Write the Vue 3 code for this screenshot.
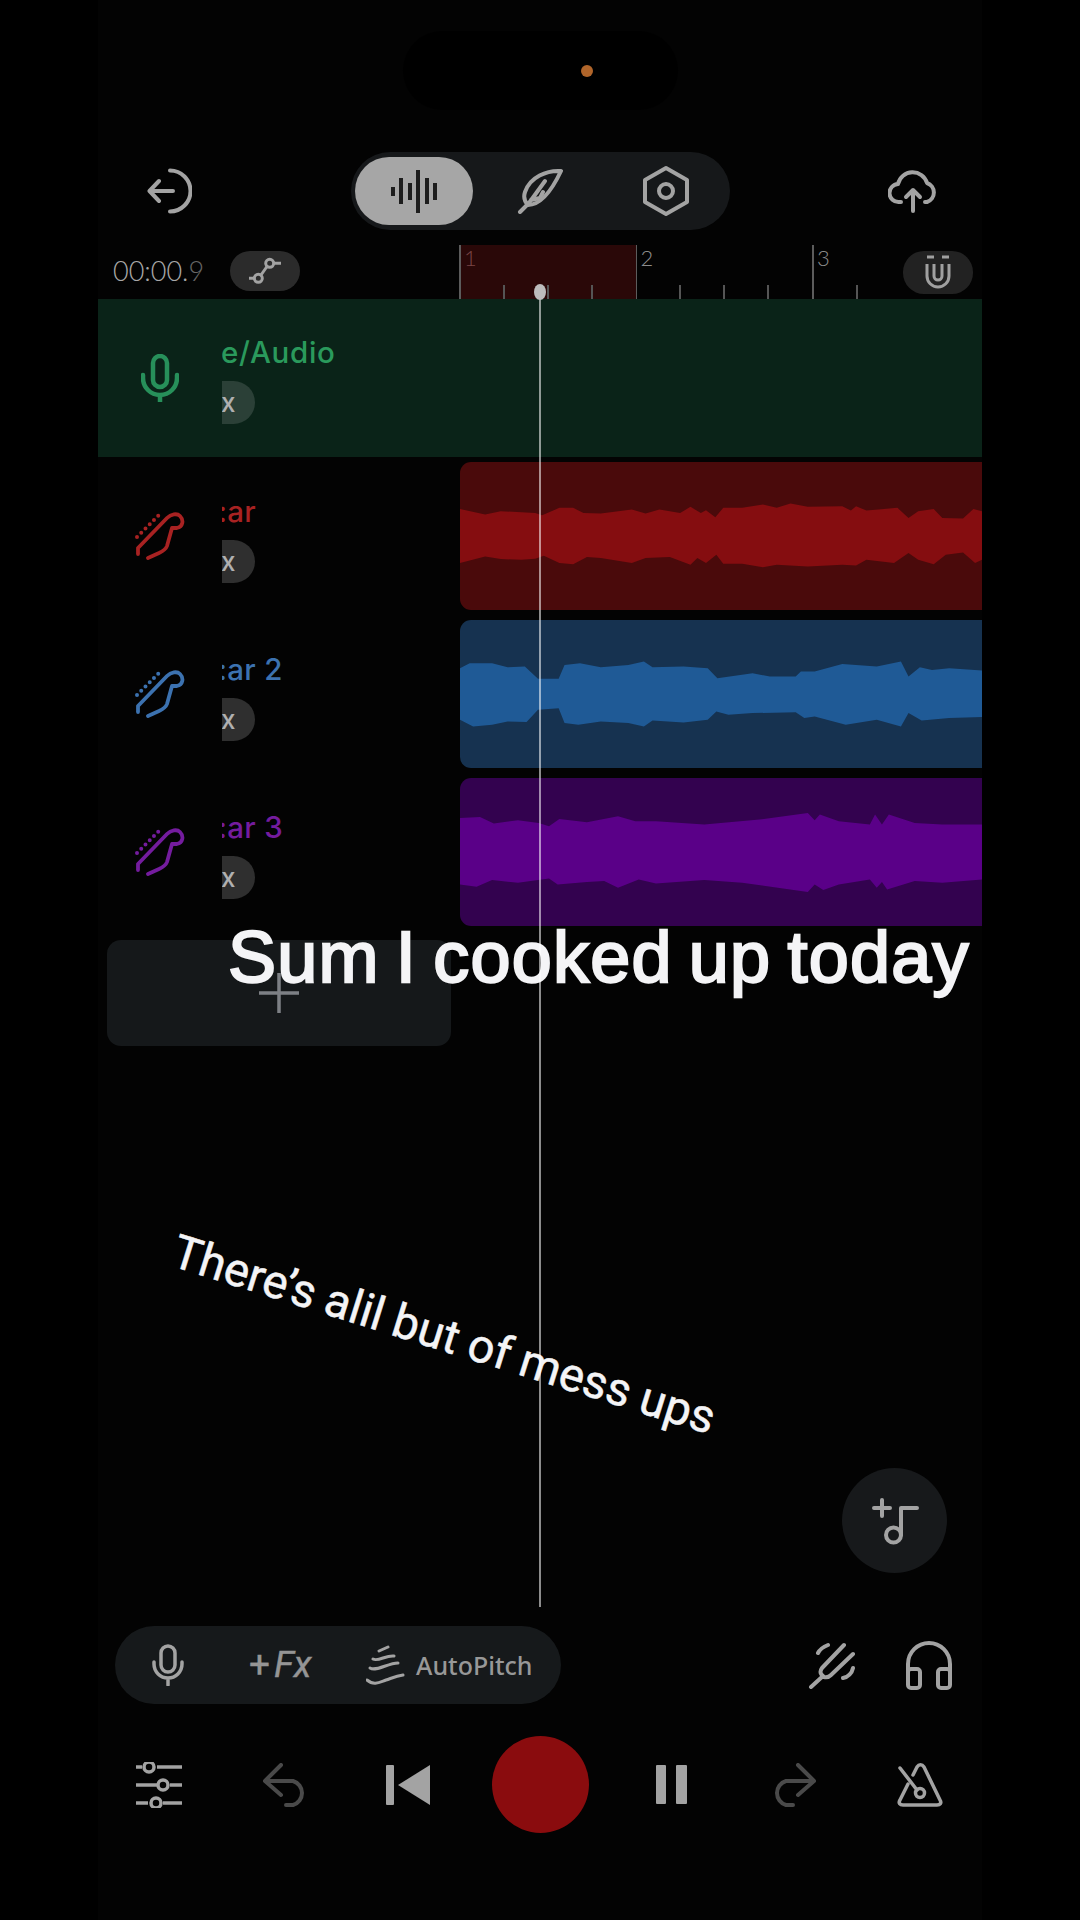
<script setup>
const pts = (top, bottom) => [...top, ...[...bottom].reverse()].map(p => p.join(',')).join(' ')

const redTop = [[32,178],[105,195],[150,185],[250,190],[270,197],[320,175],[360,175],[390,190],[440,192],[530,180],[570,192],[610,180],[670,190],[700,172],[730,190],[745,182],[772,203],[795,175],[850,175],[910,165],[950,175],[990,162],[1040,172],[1140,170],[1165,183],[1180,170],[1210,183],[1300,175],[1332,205],[1360,185],[1405,178],[1430,205],[1490,207],[1520,178],[1545,185]]
const redBottom = [[32,340],[105,320],[150,328],[210,330],[250,327],[275,318],[320,340],[360,343],[400,322],[440,325],[530,340],[570,325],[640,322],[700,345],[720,325],[745,340],[775,315],[795,342],[850,342],[910,352],[950,345],[1040,350],[1140,345],[1180,347],[1210,330],[1290,340],[1332,310],[1360,330],[1405,343],[1440,315],[1490,308],[1525,340],[1545,330]]
const blueTop = [[32,655],[60,640],[125,640],[170,652],[220,650],[258,687],[318,687],[335,645],[380,640],[440,652],[520,645],[565,635],[590,652],[680,650],[750,655],[778,685],[880,670],[930,680],[1005,680],[1020,665],[1060,665],[1140,642],[1240,650],[1310,635],[1332,680],[1365,652],[1400,660],[1450,655],[1545,662]]
const blueBottom = [[32,810],[70,830],[125,825],[170,815],[225,817],[258,780],[318,775],[335,820],[375,825],[440,815],[520,820],[565,830],[590,812],[680,818],[750,810],[775,785],[810,795],[880,790],[1005,787],[1030,805],[1060,800],[1150,825],[1240,810],[1310,830],[1332,790],[1370,812],[1450,805],[1545,802]]
const purpleTop = [[32,1105],[90,1102],[130,1122],[200,1112],[260,1120],[290,1130],[320,1108],[400,1118],[490,1100],[540,1115],[600,1115],[740,1125],[900,1110],[1040,1090],[1060,1112],[1075,1095],[1130,1115],[1220,1125],[1235,1095],[1255,1125],[1275,1095],[1350,1120],[1430,1125],[1545,1125]]
const purpleBottom = [[32,1305],[80,1312],[125,1292],[200,1300],[290,1287],[315,1305],[400,1298],[450,1295],[490,1315],[550,1290],[600,1302],[740,1292],[850,1300],[1040,1328],[1060,1305],[1085,1322],[1130,1305],[1220,1290],[1240,1315],[1255,1298],[1270,1320],[1350,1295],[1430,1300],[1545,1290]]

const tracks = [
  { name: ':ar', cls: 'red', box: '32 38 1513 442', points: pts(redTop, redBottom) },
  { name: ':ar 2', cls: 'blue', box: '32 510 1513 445', points: pts(blueTop, blueBottom) },
  { name: ':ar 3', cls: 'purple', box: '32 985 1513 445', points: pts(purpleTop, purpleBottom) },
]

const bars = [{ n: 1, x: 0 }, { n: 2, x: 176.5 }, { n: 3, x: 353 }]
const ticks = [44, 88, 132, 220, 264, 308, 397]
const waveBars = [9, 26, 17, 43, 26, 17]
</script>

<template>
  <div class="screen">
    <div class="phone">
      <div class="notch"><span class="lens"></span></div>

      <header class="topbar">
        <svg class="ic back" viewBox="0 0 46 46"><path d="M27 23H4M13 13 3.500 23 13 33M24 2.500A20.500 20.500 0 0 1 24 43.500"/></svg>
        <div class="segment">
          <div class="seg active">
            <span v-for="(h, i) in waveBars" :key="i" class="wbar" :style="{ height: h + 'px' }"></span>
          </div>
          <div class="seg">
            <svg class="ic feather" viewBox="0 0 46 46"><path d="M44 3C30 2 13 9 8 24 6 30 8 34 11 37 24 37 35 22 44 3Z"/><path d="M3 44 12 35 28 13M14 32 23 30 26 24"/></svg>
          </div>
          <div class="seg">
            <svg class="ic hex" viewBox="0 0 46 52"><path d="M23 3 44 15V37L23 49 2 37V15Z"/><circle cx="23" cy="26" r="7"/></svg>
          </div>
        </div>
        <svg class="ic cloud" viewBox="0 0 50 44"><path d="M13 33H11A9 9 0 0 1 10 15 15 15 0 0 1 39 14 10 10 0 0 1 39 33H37"/><path d="M25 42V21M18 28 25 21 32 28"/></svg>
      </header>

      <div class="timeline">
        <div class="time">00:00.<span class="dim">9</span></div>
        <div class="link-btn">
          <svg class="ic link" viewBox="0 0 32 32"><circle cx="9.300" cy="23.300" r="4"/><circle cx="20.700" cy="8.300" r="4"/><path d="M0 23.300H5M25 8.300H32M12 20 18 11.500"/></svg>
        </div>
        <div class="ruler">
          <div class="loop"></div>
          <template v-for="b in bars" :key="b.n">
            <span class="bar" :style="{ left: b.x + 'px' }"></span>
            <span class="bar-num" :class="{ first: b.n === 1 }" :style="{ left: b.x + 5 + 'px' }">{{ b.n }}</span>
          </template>
          <span v-for="t in ticks" :key="t" class="tick" :style="{ left: t + 'px' }"></span>
        </div>
        <div class="magnet-btn">
          <svg class="ic magnet" viewBox="0 0 30 38"><path d="M4 10V22A11 11 0 0 0 26 22V10M11 10V22A4 4 0 0 0 19 22V10M4 3H11M19 3H26"/></svg>
        </div>
      </div>

      <div class="track-green">
        <div class="head-icon">
          <svg class="ic mic-green" viewBox="0 0 38 48"><rect x="12" y="2" width="14" height="31" rx="7"/><path d="M2 21V24A17 17 0 0 0 36 24V21M19 41V48"/></svg>
        </div>
        <div class="info">
          <div class="name">e/Audio</div>
          <div class="fx">x</div>
        </div>
      </div>

      <div class="tracks">
        <div v-for="t in tracks" :key="t.name" class="track" :class="t.cls">
          <div class="head">
            <div class="head-icon">
              <svg class="ic guitar" viewBox="0 0 50 50"><path d="M3 43V37L32 7C36 3 42 2 45 5 49 9 48 16 42 17L37 17 32 35C31 38 28 40 24 42L13 47"/><path class="dots" d="M2 26 24 4"/></svg>
            </div>
            <div class="info">
              <div class="name">{{ t.name }}</div>
              <div class="fx">x</div>
            </div>
          </div>
          <div class="clip">
            <svg class="wave" :viewBox="t.box" preserveAspectRatio="none"><polygon :points="t.points"/></svg>
          </div>
        </div>
      </div>

      <div class="add-track">
        <svg class="plus" viewBox="0 0 40 40"><path d="M20 0V40M0 20H40"/></svg>
      </div>

      <div class="fab-row">
        <div class="fab">
          <svg class="ic note" viewBox="0 0 48 48"><path d="M3 11H19M11 3V19M30 38V11H46"/><circle cx="22.500" cy="38" r="7.500"/></svg>
        </div>
      </div>

      <div class="toolbar">
        <div class="tool-pill">
          <svg class="ic mic-small" viewBox="0 0 32 42"><rect x="9" y="2" width="14" height="26" rx="7"/><path d="M2 18V20A14 14 0 0 0 30 20V18M16 35V41"/></svg>
          <div class="fx-label"><span class="fx-plus">+</span><i>Fx</i></div>
          <div class="auto">
            <svg class="ic pitch" viewBox="0 0 40 42"><path d="M13 7 22 3M7 15C12 18 20 11 28 12M4 24C10 28 22 19 32 19M1 36C8 42 14 38 20 36 26 34 30 32 37 31"/></svg>
            <span class="auto-text">AutoPitch</span>
          </div>
        </div>
        <div class="tool-right">
          <svg class="ic fork" viewBox="0 0 48 48"><path d="M36 4 14 27C11 31 13 34 16 36 19 37 21 36 23 34L45 13M3 46 15 35M10 12C12 8 15 6 20 4M35 37C40 36 44 32 45 27"/></svg>
          <svg class="ic phones" viewBox="0 0 48 50"><path d="M3 38V24A21 21 0 0 1 45 24V38"/><rect x="3" y="29" width="12" height="19" rx="3"/><rect x="33" y="29" width="12" height="19" rx="3"/></svg>
        </div>
      </div>

      <div class="transport">
        <div class="cell">
          <svg class="ic sliders" viewBox="0 0 46 46"><path d="M0 5H6M21 5H46M0 23H21M34 23H46M0 41H12M27 41H46"/><circle cx="13" cy="5" r="5"/><circle cx="27" cy="23" r="5"/><circle cx="20" cy="41" r="5"/></svg>
        </div>
        <div class="cell">
          <svg class="ic undo" viewBox="-2 0 46 44"><path d="M19 2 3 18 19 32M3 18H31A12.500 12.500 0 0 1 31 42H24"/></svg>
        </div>
        <div class="cell">
          <div class="prev"><span class="prev-bar"></span><svg class="prev-tri" viewBox="0 0 32 40"><path d="M32 0V40L0 20Z"/></svg></div>
        </div>
        <div class="cell"><div class="record"></div></div>
        <div class="cell"><div class="pause"><span></span><span></span></div></div>
        <div class="cell">
          <svg class="ic undo" viewBox="2 0 46 44"><path d="M27 2 43 18 27 32M43 18H15A12.500 12.500 0 0 0 15 42H22"/></svg>
        </div>
        <div class="cell">
          <svg class="ic metro" viewBox="0 0 46 44"><path d="M11 21 3 37C1 40 3 42 6 42H40C43 42 45 40 43 37L27 4C25 1 22 1 20 4L16 12"/><path d="M3 5 20 27"/><circle cx="23" cy="30" r="4.500"/></svg>
        </div>
      </div>

      <div class="caption-main">Sum I cooked up today</div>
      <div class="caption-tilt">There’s alil but of mess ups</div>

      <div class="playhead"><span class="knob"></span></div>
    </div>
  </div>
</template>

<style>
html, body { margin: 0; background: #000; }
</style>

<style scoped>
.screen {
  width: 1080px;
  height: 1920px;
  background: #000;
  display: flex;
  justify-content: center;
  overflow: hidden;
  font-family: "Lato", "Liberation Sans", sans-serif;
}
.phone {
  position: relative;
  width: 884px;
  height: 1920px;
  background: #030303;
  display: flex;
  flex-direction: column;
  overflow: hidden;
}
.ic {
  display: block;
  fill: none;
  stroke: #a3a3a3;
  stroke-width: 4;
  stroke-linecap: round;
  stroke-linejoin: round;
}
.notch {
  position: relative;
  width: 275px;
  height: 79px;
  margin: 31px auto 0;
  background: #000;
  border-radius: 40px;
  flex: none;
}
.lens {
  position: absolute;
  left: 178px;
  top: 34px;
  width: 12px;
  height: 12px;
  border-radius: 50%;
  background: #b0652a;
}
.topbar {
  flex: none;
  margin-top: 42px;
  height: 78px;
  display: flex;
  align-items: center;
  padding-left: 48px;
}
.back { width: 46px; height: 46px; }
.segment {
  margin-left: 159px;
  width: 379px;
  height: 78px;
  box-sizing: border-box;
  padding: 5px 4px;
  background: #16181a;
  border-radius: 39px;
  display: flex;
  align-items: center;
}
.seg {
  flex: none;
  height: 68px;
  width: 118px;
  display: flex;
  align-items: center;
  justify-content: center;
  margin-right: 8px;
  border-radius: 34px;
}
.seg.active { background: #a6a6a6; gap: 4.500px; }
.wbar { width: 4px; background: #1d1d1d; }
.feather { width: 46px; height: 46px; }
.hex { width: 46px; height: 52px; }
.cloud { width: 50px; height: 44px; margin-left: 158px; }

.timeline {
  flex: none;
  position: relative;
  margin-top: 15px;
  height: 54px;
  display: flex;
}
.time {
  margin: 10px 0 0 15px;
  width: 117px;
  height: 32px;
  line-height: 32px;
  font-size: 27px;
  font-weight: 300;
  color: #a8a8a8;
  white-space: nowrap;
}
.dim { color: #666; }
.link-btn {
  margin-top: 6px;
  width: 70px;
  height: 40px;
  border-radius: 20px;
  background: #2b2b2b;
  display: flex;
  align-items: center;
  justify-content: center;
}
.link { width: 32px; height: 32px; stroke-width: 3; }
.ruler {
  position: relative;
  margin-left: 159px;
  flex: 1;
  height: 54px;
}
.loop {
  position: absolute;
  left: 0;
  top: 0;
  width: 176.500px;
  height: 54px;
  background: #2a0808;
}
.bar {
  position: absolute;
  top: 0;
  width: 1.500px;
  height: 54px;
  background: #5c5c5c;
}
.bar-num {
  position: absolute;
  top: 0;
  font-size: 22px;
  line-height: 26px;
  font-weight: 300;
  color: #8c8c8c;
}
.bar-num.first { color: #7a4646; }
.tick {
  position: absolute;
  bottom: 0;
  width: 1.500px;
  height: 14px;
  background: #555;
}
.magnet-btn {
  position: absolute;
  right: 9px;
  top: 6px;
  width: 70px;
  height: 43px;
  border-radius: 21px;
  background: #222;
  display: flex;
  align-items: center;
  justify-content: center;
}
.magnet { width: 30px; height: 38px; stroke-width: 3; stroke-linecap: butt; stroke: #a0a0a0; }

.track-green {
  flex: none;
  height: 158px;
  background: #0a2318;
  display: flex;
}
.head-icon {
  flex: none;
  width: 124px;
  display: flex;
  align-items: center;
  justify-content: center;
}
.mic-green { width: 38px; height: 48px; stroke: #27905a; stroke-width: 4.500; }
.info {
  flex: none;
  width: 140px;
  overflow: hidden;
  box-sizing: border-box;
}
.track-green .info { padding-top: 35px; }
.track-green .name { color: #2a9a5c; margin-left: -1px; letter-spacing: 0.7px; }
.track-green .fx { background: #2b4037; }
.name {
  margin-left: -4px;
  font-family: "Inter", "Liberation Sans", sans-serif;
  font-size: 29.500px;
  font-weight: 500;
  letter-spacing: 0.3px;
  line-height: 36px;
  white-space: nowrap;
}
.fx {
  margin-top: 11px;
  width: 33px;
  height: 43px;
  line-height: 43px;
  box-sizing: border-box;
  border-radius: 0 22px 22px 0;
  background: #2f2f2f;
  color: #b0b0b0;
  font-family: "Inter", "Liberation Sans", sans-serif;
  font-size: 26px;
  font-weight: 500;
  text-indent: -1px;
}
.tracks {
  flex: none;
  margin-top: 5px;
  display: flex;
  flex-direction: column;
  gap: 10px;
}
.track { height: 148px; display: flex; }
.head { flex: none; width: 362px; display: flex; }
.track .info { padding-top: 31px; }
.guitar { width: 50px; height: 50px; stroke-width: 3.800; }
.dots { stroke-dasharray: 0 6; stroke-width: 4; }
.clip {
  flex: 1;
  border-radius: 11px 0 0 11px;
  overflow: hidden;
}
.wave { display: block; width: 100%; height: 100%; }
.red .clip { background: #4a0a0b; }
.red polygon { fill: #850d10; }
.red .name { color: #a82222; }
.red .guitar { stroke: #a82222; }
.blue .clip { background: #163250; }
.blue polygon { fill: #1f5a96; }
.blue .name { color: #3c72b0; }
.blue .guitar { stroke: #3c72b0; }
.purple .clip { background: #33024f; }
.purple polygon { fill: #5a0088; }
.purple .name { color: #741c9e; }
.purple .guitar { stroke: #741c9e; }

.add-track {
  flex: none;
  margin: 14px 0 0 9px;
  width: 344px;
  height: 106px;
  border-radius: 14px;
  background: #15181a;
  display: flex;
  align-items: center;
  justify-content: center;
}
.plus { width: 40px; height: 40px; fill: none; stroke: #7d8085; stroke-width: 3.500; }
.fab-row {
  flex: none;
  margin-top: 422px;
  padding-right: 35px;
  display: flex;
  justify-content: flex-end;
}
.fab {
  width: 105px;
  height: 105px;
  border-radius: 50%;
  background: #17191b;
  display: flex;
  align-items: center;
  justify-content: center;
}
.note { width: 48px; height: 48px; }
.toolbar {
  flex: none;
  margin-top: 53px;
  height: 78px;
  display: flex;
  align-items: center;
  justify-content: space-between;
  padding: 0 29px 0 17px;
}
.tool-pill {
  width: 446px;
  height: 78px;
  border-radius: 39px;
  background: #16191b;
  display: flex;
  align-items: center;
  box-sizing: border-box;
  padding-left: 37px;
}
.mic-small { width: 32px; height: 42px; stroke-width: 3.500; }
.fx-label {
  margin-left: 65px;
  width: 70px;
  font-family: "Roboto", "Liberation Sans", sans-serif;
  font-size: 37px;
  line-height: 40px;
  color: #959595;
  white-space: nowrap;
  -webkit-text-stroke: 0.4px #959595;
}
.fx-plus { margin-right: 4px; }
.auto { display: flex; align-items: center; margin-left: 47px; }
.pitch { width: 40px; height: 42px; stroke-width: 3; }
.auto-text {
  margin-left: 10px;
  font-family: "Noto Sans", "Liberation Sans", sans-serif;
  font-size: 25px;
  font-weight: 500;
  color: #989898;
  white-space: nowrap;
}
.tool-right { display: flex; align-items: center; gap: 49px; }
.fork { width: 48px; height: 48px; }
.phones { width: 48px; height: 50px; }
.transport {
  flex: none;
  margin-top: 32px;
  height: 97px;
  display: grid;
  grid-template-columns: 122px 126px 124px 140px 122px 128px 120px;
}
.cell { display: flex; align-items: center; justify-content: center; }
.sliders { width: 46px; height: 46px; stroke-width: 3.500; stroke-linecap: butt; }
.undo { width: 46px; height: 44px; stroke: #4a4a4a; }
.prev { display: flex; align-items: center; gap: 4px; }
.prev-bar { width: 8px; height: 40px; background: #a3a3a3; border-radius: 1px; }
.prev-tri { width: 32px; height: 40px; fill: #a3a3a3; display: block; }
.record { width: 97px; height: 97px; border-radius: 50%; background: #8a0c0e; }
.pause { display: flex; gap: 10px; }
.pause span { width: 10.500px; height: 39px; background: #a3a3a3; border-radius: 1px; }
.metro { width: 46px; height: 44px; stroke-width: 3.500; }

.caption-main {
  position: absolute;
  left: 130px;
  top: 915px;
  font-family: "Liberation Sans", sans-serif;
  font-size: 72px;
  line-height: 84px;
  letter-spacing: 1.2px;
  word-spacing: -5px;
  color: #f4f4f6;
  white-space: nowrap;
  -webkit-text-stroke: 2.300px #f4f4f6;
}
.caption-tilt {
  position: absolute;
  left: 76px;
  top: 1222px;
  font-family: "Roboto", "Liberation Sans", sans-serif;
  font-size: 47px;
  word-spacing: -0.500px;
  line-height: 56px;
  color: #f4f4f6;
  white-space: nowrap;
  -webkit-text-stroke: 0.5px #f4f4f6;
  transform: rotate(17.400deg);
  transform-origin: 0 50%;
}
.playhead {
  position: absolute;
  left: 441px;
  top: 291px;
  width: 2px;
  height: 1316px;
  background: rgba(255, 255, 255, 0.55);
}
.knob {
  position: absolute;
  left: -5px;
  top: -7px;
  width: 12px;
  height: 16px;
  border-radius: 50%;
  background: #bcbcbc;
}
</style>
